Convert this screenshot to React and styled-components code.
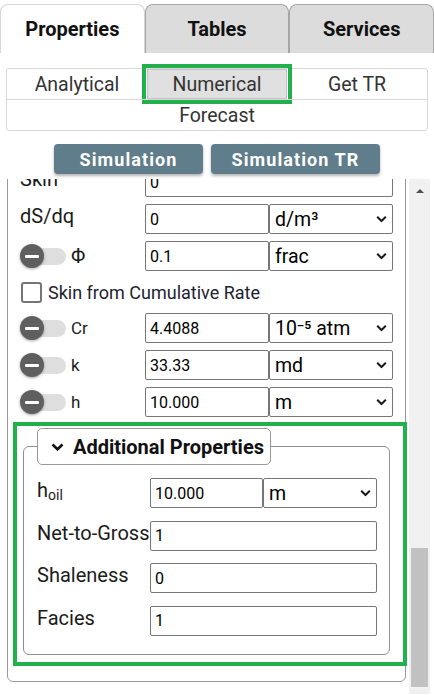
import React, { useLayoutEffect, useRef } from "react";
import styled, { createGlobalStyle, css } from "styled-components";

const GlobalStyle = createGlobalStyle`
  html, body { margin: 0; padding: 0; background: #fff; overflow: hidden; }
  body { font-family: Roboto, "Noto Sans", Arial, sans-serif; }
  *, *::before, *::after { box-sizing: border-box; }
`;

const Page = styled.div`
  width: 434px;
  height: 695px;
  display: flex;
  flex-direction: column;
  overflow: hidden;
`;

const TabBar = styled.div`
  display: flex;
  padding-top: 4px;
  height: 53px;
  flex: none;
`;

const Tab = styled.div`
  flex: 1;
  display: flex;
  align-items: center;
  justify-content: center;
  font-weight: 700;
  font-size: 20px;
  color: #111;
  background: ${(p) => (p.$active ? "#fff" : "#dcdcdc")};
  border: 1px solid ${(p) => (p.$active ? "#d6d6d6" : "#a6a6a6")};
  border-bottom: none;
  border-radius: 8px 8px 0 0;
`;

const SubTabs = styled.div`
  margin: 15px 6px 0;
  border: 1px solid #d9d9d9;
  border-radius: 3px;
  display: grid;
  grid-template-columns: repeat(3, 1fr);
  flex: none;
`;

const SubTab = styled.div`
  height: ${(p) => (p.$full ? "31px" : "30px")};
  display: flex;
  align-items: center;
  justify-content: center;
  font-size: 19.5px;
  color: #333;
  ${(p) =>
    p.$full &&
    css`
      grid-column: 1 / -1;
      border-top: 1px solid #d9d9d9;
    `}
  ${(p) =>
    p.$active &&
    css`
      background: #e0e0e0;
      box-shadow: inset 0 0 0 1px #c4c4c4;
      outline: 4px solid #21b04b;
      outline-offset: 1px;
    `}
`;

const ButtonRow = styled.div`
  display: flex;
  justify-content: center;
  gap: 8px;
  margin-top: 13px;
  flex: none;
`;

const ActionButton = styled.button`
  width: ${(p) => p.$w}px;
  height: 30px;
  border: none;
  border-radius: 4px;
  background: #607d8b;
  color: #fff;
  font-family: Roboto, "Noto Sans", Arial, sans-serif;
  font-weight: 700;
  font-size: 18px;
  letter-spacing: 1.1px;
  box-shadow: 0 2px 3px rgba(0, 0, 0, 0.3);
  padding: 0;
`;

const ScrollArea = styled.div`
  display: flex;
  margin-top: 5px;
  height: 515px;
  flex: none;
`;

const Viewport = styled.div`
  width: 409px;
  height: 515px;
  overflow: hidden;
  flex: none;
`;

const ScrollTrack = styled.div`
  width: 21px;
  height: 515px;
  background: #f1f1f1;
  flex: none;
  display: flex;
  flex-direction: column;
`;

const ArrowButton = styled.div`
  height: 17px;
  display: flex;
  justify-content: center;
  padding-top: 10px;
  &::before {
    content: "";
    width: 0;
    height: 0;
    border-left: 4.5px solid transparent;
    border-right: 4.5px solid transparent;
    border-bottom: 4.5px solid #505050;
  }
`;

const Thumb = styled.div`
  margin-top: 352px;
  margin-left: 2px;
  width: 17px;
  height: 139px;
  background: #c1c1c1;
`;

const Panel = styled.div`
  margin: 0 3px 24px 7px;
  border: 1px solid #9a9a9a;
  border-radius: 6px;
  padding: 7px 2px 19px 9px;
`;

const Fields = styled.div`
  display: flex;
  flex-direction: column;
  gap: 7px;
  margin: 0 10px 0 3px;
`;

const FieldRow = styled.div`
  display: grid;
  grid-template-columns: ${(p) => p.$cols || "125px 124px 124px"};
  height: 30px;
  align-items: center;
`;

const Label = styled.div`
  align-self: start;
  font-size: 20px;
  line-height: 24px;
  color: #1b1b1b;
  white-space: nowrap;
`;

const Sub = styled.sub`
  font-size: 14px;
  line-height: 0;
  vertical-align: -3px;
`;

const TextInput = styled.input`
  height: 30px;
  width: 100%;
  min-width: 0;
  border: 1px solid #767676;
  border-radius: 2px;
  padding: 0 4px;
  font-family: Roboto, "Noto Sans", Arial, sans-serif;
  font-size: 16px;
  color: #000;
  background: #fff;
  grid-column: ${(p) => (p.$span ? "span 2" : "auto")};
`;

const SelectWrap = styled.div`
  position: relative;
  height: 30px;
`;

const Select = styled.select`
  appearance: none;
  width: 100%;
  height: 30px;
  border: 1px solid #767676;
  border-radius: 2px;
  padding: 0 0 0 5px;
  font-family: Roboto, "Noto Sans", Arial, sans-serif;
  font-size: 19.5px;
  color: #000;
  background: #fff;
`;

const ChevronIcon = styled.svg`
  position: absolute;
  right: 6px;
  top: 50%;
  transform: translateY(-50%);
  pointer-events: none;
`;

const ToggleCell = styled.div`
  display: flex;
  align-items: center;
  gap: 5px;
`;

const Toggle = styled.span`
  position: relative;
  display: inline-block;
  width: 46px;
  height: 24px;
  flex: none;
`;

const Track = styled.span`
  position: absolute;
  left: 6px;
  right: 0;
  top: 3.5px;
  height: 17px;
  border-radius: 9px;
  background: #dedede;
`;

const Knob = styled.span`
  position: absolute;
  left: 0;
  top: 0;
  width: 24px;
  height: 24px;
  border-radius: 50%;
  background: #5f5f5f;
  box-shadow: 0 1px 3px rgba(0, 0, 0, 0.35);
  &::after {
    content: "";
    position: absolute;
    left: 5px;
    right: 5px;
    top: 10.5px;
    height: 3px;
    background: #fff;
    border-radius: 1px;
  }
`;

const ToggleLabel = styled.span`
  font-size: ${(p) => p.$size || 17}px;
  color: #1b1b1b;
`;

const CheckRow = styled.label`
  display: flex;
  align-items: center;
  gap: 6px;
  height: 28px;
  font-size: 18px;
  color: #1e2230;
`;

const CheckBox = styled.input`
  appearance: none;
  margin: 0 0 0 1px;
  width: 21px;
  height: 21px;
  border: 2px solid #767676;
  border-radius: 3px;
  background: #fff;
`;

const Section = styled.div`
  margin-top: 9px;
  outline: 4px solid #21b04b;
  padding: 2px 13px 7px 6px;
`;

const FieldSet = styled.fieldset`
  margin: 0;
  min-width: 0;
  border: 1px solid #8f8f8f;
  border-radius: 6px;
  padding: 13px 12px 18px 13px;
`;

const Legend = styled.legend`
  padding: 0;
  margin: 0;
`;

const LegendBox = styled.span`
  display: flex;
  align-items: center;
  gap: 9px;
  height: 37px;
  padding: 0 6px 0 13px;
  border: 1px solid #999;
  border-radius: 5px;
  background: #fff;
  font-weight: 700;
  font-size: 20px;
  color: #111;
`;

const FsFields = styled.div`
  display: flex;
  flex-direction: column;
  gap: 12.5px;
`;

const Chevron = () => (
  <ChevronIcon width="11" height="7" viewBox="0 0 11 7">
    <path d="M1.2 1.2 L5.5 5.5 L9.8 1.2" fill="none" stroke="#1a1a1a" strokeWidth="2" />
  </ChevronIcon>
);

const Unit = ({ options, value }) => (
  <SelectWrap>
    <Select defaultValue={value}>
      {options.map((o) => (
        <option key={o} value={o}>
          {o}
        </option>
      ))}
    </Select>
    <Chevron />
  </SelectWrap>
);

const Switch = () => (
  <Toggle>
    <Track />
    <Knob />
  </Toggle>
);

const ToggleRow = ({ label, size, value, unit, units }) => (
  <FieldRow>
    <ToggleCell>
      <Switch />
      <ToggleLabel $size={size}>{label}</ToggleLabel>
    </ToggleCell>
    <TextInput defaultValue={value} />
    <Unit options={units} value={unit} />
  </FieldRow>
);

export default function App() {
  const vp = useRef(null);
  useLayoutEffect(() => {
    if (vp.current) vp.current.scrollTop = 20;
  }, []);

  const fsCols = "113px 113px 114px";

  return (
    <Page>
      <GlobalStyle />
      <TabBar>
        <Tab $active>Properties</Tab>
        <Tab>Tables</Tab>
        <Tab>Services</Tab>
      </TabBar>

      <SubTabs>
        <SubTab>Analytical</SubTab>
        <SubTab $active>Numerical</SubTab>
        <SubTab>Get TR</SubTab>
        <SubTab $full>Forecast</SubTab>
      </SubTabs>

      <ButtonRow>
        <ActionButton $w={149}>Simulation</ActionButton>
        <ActionButton $w={169}>Simulation TR</ActionButton>
      </ButtonRow>

      <ScrollArea>
        <Viewport ref={vp}>
          <Panel>
            <Fields>
              <FieldRow>
                <Label>Skin</Label>
                <TextInput $span defaultValue="0" />
              </FieldRow>
              <FieldRow>
                <Label>dS/dq</Label>
                <TextInput defaultValue="0" />
                <Unit options={["d/m³"]} value="d/m³" />
              </FieldRow>
              <ToggleRow label="Φ" size={20} value="0.1" unit="frac" units={["frac", "%"]} />
              <CheckRow>
                <CheckBox type="checkbox" />
                Skin from Cumulative Rate
              </CheckRow>
              <ToggleRow label="Cr" value="4.4088" unit="10⁻⁵ atm" units={["10⁻⁵ atm"]} />
              <ToggleRow label="k" value="33.33" unit="md" units={["md", "D"]} />
              <ToggleRow label="h" value="10.000" unit="m" units={["m", "ft"]} />
            </Fields>

            <Section>
              <FieldSet>
                <Legend>
                  <LegendBox>
                    <svg width="13" height="8" viewBox="0 0 13 8">
                      <path d="M1.5 1.5 L6.5 6.3 L11.5 1.5" fill="none" stroke="#111" strokeWidth="2.6" />
                    </svg>
                    Additional Properties
                  </LegendBox>
                </Legend>
                <FsFields>
                  <FieldRow $cols={fsCols}>
                    <Label>
                      h<Sub>oil</Sub>
                    </Label>
                    <TextInput defaultValue="10.000" />
                    <Unit options={["m", "ft"]} value="m" />
                  </FieldRow>
                  <FieldRow $cols={fsCols}>
                    <Label>Net-to-Gross</Label>
                    <TextInput $span defaultValue="1" />
                  </FieldRow>
                  <FieldRow $cols={fsCols}>
                    <Label>Shaleness</Label>
                    <TextInput $span defaultValue="0" />
                  </FieldRow>
                  <FieldRow $cols={fsCols}>
                    <Label>Facies</Label>
                    <TextInput $span defaultValue="1" />
                  </FieldRow>
                </FsFields>
              </FieldSet>
            </Section>
          </Panel>
        </Viewport>
        <ScrollTrack>
          <ArrowButton />
          <Thumb />
        </ScrollTrack>
      </ScrollArea>
    </Page>
  );
}
